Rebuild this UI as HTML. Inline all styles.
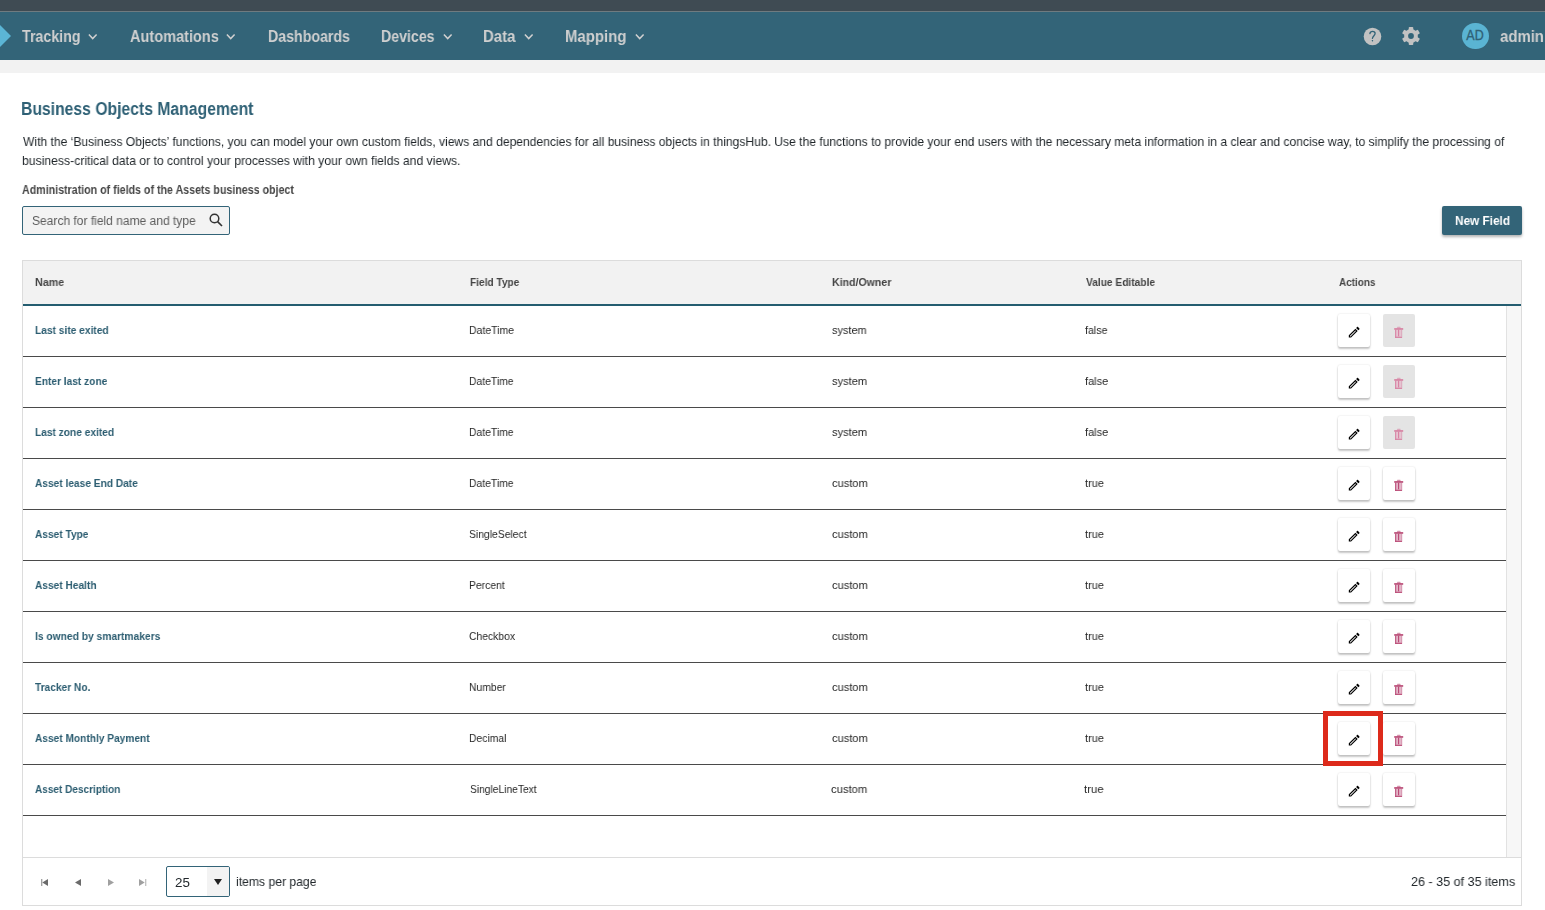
<!DOCTYPE html>
<html><head><meta charset="utf-8">
<style>
*{margin:0;padding:0;box-sizing:border-box}
html,body{width:1545px;height:910px;overflow:hidden;background:#fff;font-family:"Liberation Sans",sans-serif}
.a{position:absolute;white-space:nowrap}
.t{position:absolute;white-space:nowrap;line-height:1;transform-origin:0 0;will-change:transform}
#topbar{position:absolute;left:0;top:0;width:1545px;height:11px;background:#3f4b53}
#topline{position:absolute;left:0;top:11px;width:1545px;height:1px;background:#6f7b80}
#nav{position:absolute;left:0;top:12px;width:1545px;height:48px;background:#336478}
#band{position:absolute;left:0;top:60px;width:1545px;height:13px;background:#f2f2f2}
.chev{position:absolute;width:10px;height:8px}
.rowline{position:absolute;left:23px;width:1483px;height:1px;background:#4a4a4a}
.btn{position:absolute;width:32px;height:33px;background:#fff;border-radius:2px;box-shadow:0 2px 2px rgba(0,0,0,.22),0 0 2px rgba(0,0,0,.14)}
.btn.dis{background:#e4e4e4;box-shadow:none}
.btn svg{position:absolute;left:10px;top:12px}
</style></head><body>
<div id="topbar"></div><div id="topline"></div>
<div id="nav"></div>
<div id="band"></div>
<svg class="a" style="left:0;top:25px" width="12" height="22" viewBox="0 0 12 22"><path d="M0 0 L11 11 L0 22 Z" fill="#5bb5d5"/></svg>
<svg class="chev" style="left:88px;top:33px" viewBox="0 0 10 8"><path d="M0.9 1.4 L4.7 5.6 L8.6 1.4" stroke="#d0d0d0" stroke-width="1.5" fill="none"/></svg>
<svg class="chev" style="left:226px;top:33px" viewBox="0 0 10 8"><path d="M0.9 1.4 L4.7 5.6 L8.6 1.4" stroke="#d0d0d0" stroke-width="1.5" fill="none"/></svg>
<svg class="chev" style="left:443px;top:33px" viewBox="0 0 10 8"><path d="M0.9 1.4 L4.7 5.6 L8.6 1.4" stroke="#d0d0d0" stroke-width="1.5" fill="none"/></svg>
<svg class="chev" style="left:524px;top:33px" viewBox="0 0 10 8"><path d="M0.9 1.4 L4.7 5.6 L8.6 1.4" stroke="#d0d0d0" stroke-width="1.5" fill="none"/></svg>
<svg class="chev" style="left:635px;top:33px" viewBox="0 0 10 8"><path d="M0.9 1.4 L4.7 5.6 L8.6 1.4" stroke="#d0d0d0" stroke-width="1.5" fill="none"/></svg>
<svg class="a" style="left:1363px;top:27px" width="19" height="19" viewBox="0 0 19 19"><circle cx="9.5" cy="9.5" r="8.8" fill="#c2c2c2"/><path d="M6.9 6.6 C7.1 4.9 8.3 4.3 9.6 4.3 C11.2 4.3 12.1 5.3 12.1 6.5 C12.1 8.4 9.8 8.9 9.4 11.3" stroke="#336478" stroke-width="1.3" fill="none" stroke-linecap="round"/><path d="M8.6 12.9 L10.3 12.9 L9.3 15 Z" fill="#336478"/></svg>
<svg class="a" style="left:1398.8px;top:24.1px" width="24" height="24" viewBox="0 0 24 24"><circle cx="12" cy="12" r="6.9" fill="#c2c2c2"/><rect x="9.75" y="2.9" width="4.5" height="18.2" rx="0.8" fill="#c2c2c2" transform="rotate(0 12 12)"/><rect x="9.75" y="2.9" width="4.5" height="18.2" rx="0.8" fill="#c2c2c2" transform="rotate(60 12 12)"/><rect x="9.75" y="2.9" width="4.5" height="18.2" rx="0.8" fill="#c2c2c2" transform="rotate(120 12 12)"/><circle cx="12" cy="12" r="2.9" fill="#336478"/></svg>
<div class="a" style="left:1462px;top:22.6px;width:26.5px;height:26.5px;border-radius:50%;background:#5ab4d3"></div><div class="a" style="left:1475.2px;top:22.3px;width:40px;margin-left:-20px;height:26px;line-height:26px;text-align:center;color:#2f6176;font-size:14.5px;transform:scaleX(.86);-webkit-text-stroke:0.35px #2f6176">AD</div>

<div class="a" style="left:22px;top:206px;width:208px;height:29px;border:1px solid #336478;border-radius:2px;background:#f3f3f3"></div>
<svg class="a" style="left:209px;top:213px" width="14" height="14" viewBox="0 0 14 14"><circle cx="5.5" cy="5.5" r="4.3" stroke="#333" stroke-width="1.5" fill="none"/><path d="M8.6 8.6 L13 13" stroke="#333" stroke-width="1.6"/></svg>
<div class="a" style="left:1442px;top:206px;width:80px;height:29px;background:#336478;border-radius:2px;box-shadow:0 2px 3px rgba(0,0,0,.3)"></div>

<!-- table -->
<div class="a" style="left:22px;top:260px;width:1500px;height:646px;border:1px solid #dcdcdc"></div>
<div class="a" style="left:23px;top:261px;width:1498px;height:43px;background:#f2f2f2"></div>
<div class="a" style="left:23px;top:304px;width:1498px;height:2px;background:#245d70"></div>
<div class="a" style="left:1506px;top:306px;width:15px;height:551px;background:#f7f7f7;border-left:1px solid #e2e2e2"></div>
<div class="a" style="left:23px;top:857px;width:1498px;height:1px;background:#dcdcdc"></div>
<div class="btn" style="left:1338px;top:314px"><svg width="14.4" height="14.4" viewBox="0 0 24 24" style="left:8.6px;top:11px"><path fill="#000" d="M3 17.25V21h3.75L17.81 9.94l-3.75-3.75L3 17.25zM5.92 19H5v-.92l9.06-9.06.92.92L5.92 19zM20.71 5.63l-2.34-2.34c-.2-.2-.45-.29-.71-.29s-.51.1-.7.29l-1.83 1.83 3.75 3.75 1.83-1.83c.39-.39.39-1.020 0-1.41z"/></svg></div>
<div class="btn dis" style="left:1383px;top:314px"><svg width="10" height="12" viewBox="0 0 10 12" style="left:10.8px;top:12px"><path d="M2.6 2.4 L3.4 0.8 L6.2 0.8 L7 2.4Z" fill="#d6789c" opacity=".55"/><rect x="0.2" y="2.2" width="9" height="1.5" fill="#d6789c"/><rect x="1.2" y="3.7" width="7" height="8" fill="#d6789c" opacity=".5"/><rect x="1.2" y="3.7" width="1" height="8.2" fill="#d6789c" opacity=".85"/><rect x="1.2" y="10.9" width="6.8" height="1" fill="#d6789c" opacity=".85"/><rect x="4.1" y="3.7" width="1" height="6.5" fill="#d6789c" opacity=".9"/><rect x="2.4" y="4" width="1.4" height="6.4" fill="#fff" opacity=".35"/><rect x="5.4" y="4" width="1.4" height="6.4" fill="#fff" opacity=".35"/></svg></div>
<div class="rowline" style="top:356px"></div>
<div class="btn" style="left:1338px;top:365px"><svg width="14.4" height="14.4" viewBox="0 0 24 24" style="left:8.6px;top:11px"><path fill="#000" d="M3 17.25V21h3.75L17.81 9.94l-3.75-3.75L3 17.25zM5.92 19H5v-.92l9.06-9.06.92.92L5.92 19zM20.71 5.63l-2.34-2.34c-.2-.2-.45-.29-.71-.29s-.51.1-.7.29l-1.83 1.83 3.75 3.75 1.83-1.83c.39-.39.39-1.020 0-1.41z"/></svg></div>
<div class="btn dis" style="left:1383px;top:365px"><svg width="10" height="12" viewBox="0 0 10 12" style="left:10.8px;top:12px"><path d="M2.6 2.4 L3.4 0.8 L6.2 0.8 L7 2.4Z" fill="#d6789c" opacity=".55"/><rect x="0.2" y="2.2" width="9" height="1.5" fill="#d6789c"/><rect x="1.2" y="3.7" width="7" height="8" fill="#d6789c" opacity=".5"/><rect x="1.2" y="3.7" width="1" height="8.2" fill="#d6789c" opacity=".85"/><rect x="1.2" y="10.9" width="6.8" height="1" fill="#d6789c" opacity=".85"/><rect x="4.1" y="3.7" width="1" height="6.5" fill="#d6789c" opacity=".9"/><rect x="2.4" y="4" width="1.4" height="6.4" fill="#fff" opacity=".35"/><rect x="5.4" y="4" width="1.4" height="6.4" fill="#fff" opacity=".35"/></svg></div>
<div class="rowline" style="top:407px"></div>
<div class="btn" style="left:1338px;top:416px"><svg width="14.4" height="14.4" viewBox="0 0 24 24" style="left:8.6px;top:11px"><path fill="#000" d="M3 17.25V21h3.75L17.81 9.94l-3.75-3.75L3 17.25zM5.92 19H5v-.92l9.06-9.06.92.92L5.92 19zM20.71 5.63l-2.34-2.34c-.2-.2-.45-.29-.71-.29s-.51.1-.7.29l-1.83 1.83 3.75 3.75 1.83-1.83c.39-.39.39-1.020 0-1.41z"/></svg></div>
<div class="btn dis" style="left:1383px;top:416px"><svg width="10" height="12" viewBox="0 0 10 12" style="left:10.8px;top:12px"><path d="M2.6 2.4 L3.4 0.8 L6.2 0.8 L7 2.4Z" fill="#d6789c" opacity=".55"/><rect x="0.2" y="2.2" width="9" height="1.5" fill="#d6789c"/><rect x="1.2" y="3.7" width="7" height="8" fill="#d6789c" opacity=".5"/><rect x="1.2" y="3.7" width="1" height="8.2" fill="#d6789c" opacity=".85"/><rect x="1.2" y="10.9" width="6.8" height="1" fill="#d6789c" opacity=".85"/><rect x="4.1" y="3.7" width="1" height="6.5" fill="#d6789c" opacity=".9"/><rect x="2.4" y="4" width="1.4" height="6.4" fill="#fff" opacity=".35"/><rect x="5.4" y="4" width="1.4" height="6.4" fill="#fff" opacity=".35"/></svg></div>
<div class="rowline" style="top:458px"></div>
<div class="btn" style="left:1338px;top:467px"><svg width="14.4" height="14.4" viewBox="0 0 24 24" style="left:8.6px;top:11px"><path fill="#000" d="M3 17.25V21h3.75L17.81 9.94l-3.75-3.75L3 17.25zM5.92 19H5v-.92l9.06-9.06.92.92L5.92 19zM20.71 5.63l-2.34-2.34c-.2-.2-.45-.29-.71-.29s-.51.1-.7.29l-1.83 1.83 3.75 3.75 1.83-1.83c.39-.39.39-1.020 0-1.41z"/></svg></div>
<div class="btn" style="left:1383px;top:467px"><svg width="10" height="12" viewBox="0 0 10 12" style="left:10.8px;top:12px"><path d="M2.6 2.4 L3.4 0.8 L6.2 0.8 L7 2.4Z" fill="#b33a69" opacity=".55"/><rect x="0.2" y="2.2" width="9" height="1.5" fill="#b33a69"/><rect x="1.2" y="3.7" width="7" height="8" fill="#b33a69" opacity=".5"/><rect x="1.2" y="3.7" width="1" height="8.2" fill="#b33a69" opacity=".85"/><rect x="1.2" y="10.9" width="6.8" height="1" fill="#b33a69" opacity=".85"/><rect x="4.1" y="3.7" width="1" height="6.5" fill="#b33a69" opacity=".9"/><rect x="2.4" y="4" width="1.4" height="6.4" fill="#fff" opacity=".35"/><rect x="5.4" y="4" width="1.4" height="6.4" fill="#fff" opacity=".35"/></svg></div>
<div class="rowline" style="top:509px"></div>
<div class="btn" style="left:1338px;top:518px"><svg width="14.4" height="14.4" viewBox="0 0 24 24" style="left:8.6px;top:11px"><path fill="#000" d="M3 17.25V21h3.75L17.81 9.94l-3.75-3.75L3 17.25zM5.92 19H5v-.92l9.06-9.06.92.92L5.92 19zM20.71 5.63l-2.34-2.34c-.2-.2-.45-.29-.71-.29s-.51.1-.7.29l-1.83 1.83 3.75 3.75 1.83-1.83c.39-.39.39-1.020 0-1.41z"/></svg></div>
<div class="btn" style="left:1383px;top:518px"><svg width="10" height="12" viewBox="0 0 10 12" style="left:10.8px;top:12px"><path d="M2.6 2.4 L3.4 0.8 L6.2 0.8 L7 2.4Z" fill="#b33a69" opacity=".55"/><rect x="0.2" y="2.2" width="9" height="1.5" fill="#b33a69"/><rect x="1.2" y="3.7" width="7" height="8" fill="#b33a69" opacity=".5"/><rect x="1.2" y="3.7" width="1" height="8.2" fill="#b33a69" opacity=".85"/><rect x="1.2" y="10.9" width="6.8" height="1" fill="#b33a69" opacity=".85"/><rect x="4.1" y="3.7" width="1" height="6.5" fill="#b33a69" opacity=".9"/><rect x="2.4" y="4" width="1.4" height="6.4" fill="#fff" opacity=".35"/><rect x="5.4" y="4" width="1.4" height="6.4" fill="#fff" opacity=".35"/></svg></div>
<div class="rowline" style="top:560px"></div>
<div class="btn" style="left:1338px;top:569px"><svg width="14.4" height="14.4" viewBox="0 0 24 24" style="left:8.6px;top:11px"><path fill="#000" d="M3 17.25V21h3.75L17.81 9.94l-3.75-3.75L3 17.25zM5.92 19H5v-.92l9.06-9.06.92.92L5.92 19zM20.71 5.63l-2.34-2.34c-.2-.2-.45-.29-.71-.29s-.51.1-.7.29l-1.83 1.83 3.75 3.75 1.83-1.83c.39-.39.39-1.020 0-1.41z"/></svg></div>
<div class="btn" style="left:1383px;top:569px"><svg width="10" height="12" viewBox="0 0 10 12" style="left:10.8px;top:12px"><path d="M2.6 2.4 L3.4 0.8 L6.2 0.8 L7 2.4Z" fill="#b33a69" opacity=".55"/><rect x="0.2" y="2.2" width="9" height="1.5" fill="#b33a69"/><rect x="1.2" y="3.7" width="7" height="8" fill="#b33a69" opacity=".5"/><rect x="1.2" y="3.7" width="1" height="8.2" fill="#b33a69" opacity=".85"/><rect x="1.2" y="10.9" width="6.8" height="1" fill="#b33a69" opacity=".85"/><rect x="4.1" y="3.7" width="1" height="6.5" fill="#b33a69" opacity=".9"/><rect x="2.4" y="4" width="1.4" height="6.4" fill="#fff" opacity=".35"/><rect x="5.4" y="4" width="1.4" height="6.4" fill="#fff" opacity=".35"/></svg></div>
<div class="rowline" style="top:611px"></div>
<div class="btn" style="left:1338px;top:620px"><svg width="14.4" height="14.4" viewBox="0 0 24 24" style="left:8.6px;top:11px"><path fill="#000" d="M3 17.25V21h3.75L17.81 9.94l-3.75-3.75L3 17.25zM5.92 19H5v-.92l9.06-9.06.92.92L5.92 19zM20.71 5.63l-2.34-2.34c-.2-.2-.45-.29-.71-.29s-.51.1-.7.29l-1.83 1.83 3.75 3.75 1.83-1.83c.39-.39.39-1.020 0-1.41z"/></svg></div>
<div class="btn" style="left:1383px;top:620px"><svg width="10" height="12" viewBox="0 0 10 12" style="left:10.8px;top:12px"><path d="M2.6 2.4 L3.4 0.8 L6.2 0.8 L7 2.4Z" fill="#b33a69" opacity=".55"/><rect x="0.2" y="2.2" width="9" height="1.5" fill="#b33a69"/><rect x="1.2" y="3.7" width="7" height="8" fill="#b33a69" opacity=".5"/><rect x="1.2" y="3.7" width="1" height="8.2" fill="#b33a69" opacity=".85"/><rect x="1.2" y="10.9" width="6.8" height="1" fill="#b33a69" opacity=".85"/><rect x="4.1" y="3.7" width="1" height="6.5" fill="#b33a69" opacity=".9"/><rect x="2.4" y="4" width="1.4" height="6.4" fill="#fff" opacity=".35"/><rect x="5.4" y="4" width="1.4" height="6.4" fill="#fff" opacity=".35"/></svg></div>
<div class="rowline" style="top:662px"></div>
<div class="btn" style="left:1338px;top:671px"><svg width="14.4" height="14.4" viewBox="0 0 24 24" style="left:8.6px;top:11px"><path fill="#000" d="M3 17.25V21h3.75L17.81 9.94l-3.75-3.75L3 17.25zM5.92 19H5v-.92l9.06-9.06.92.92L5.92 19zM20.71 5.63l-2.34-2.34c-.2-.2-.45-.29-.71-.29s-.51.1-.7.29l-1.83 1.83 3.75 3.75 1.83-1.83c.39-.39.39-1.020 0-1.41z"/></svg></div>
<div class="btn" style="left:1383px;top:671px"><svg width="10" height="12" viewBox="0 0 10 12" style="left:10.8px;top:12px"><path d="M2.6 2.4 L3.4 0.8 L6.2 0.8 L7 2.4Z" fill="#b33a69" opacity=".55"/><rect x="0.2" y="2.2" width="9" height="1.5" fill="#b33a69"/><rect x="1.2" y="3.7" width="7" height="8" fill="#b33a69" opacity=".5"/><rect x="1.2" y="3.7" width="1" height="8.2" fill="#b33a69" opacity=".85"/><rect x="1.2" y="10.9" width="6.8" height="1" fill="#b33a69" opacity=".85"/><rect x="4.1" y="3.7" width="1" height="6.5" fill="#b33a69" opacity=".9"/><rect x="2.4" y="4" width="1.4" height="6.4" fill="#fff" opacity=".35"/><rect x="5.4" y="4" width="1.4" height="6.4" fill="#fff" opacity=".35"/></svg></div>
<div class="rowline" style="top:713px"></div>
<div class="btn" style="left:1338px;top:722px"><svg width="14.4" height="14.4" viewBox="0 0 24 24" style="left:8.6px;top:11px"><path fill="#000" d="M3 17.25V21h3.75L17.81 9.94l-3.75-3.75L3 17.25zM5.92 19H5v-.92l9.06-9.06.92.92L5.92 19zM20.71 5.63l-2.34-2.34c-.2-.2-.45-.29-.71-.29s-.51.1-.7.29l-1.83 1.83 3.75 3.75 1.83-1.83c.39-.39.39-1.020 0-1.41z"/></svg></div>
<div class="btn" style="left:1383px;top:722px"><svg width="10" height="12" viewBox="0 0 10 12" style="left:10.8px;top:12px"><path d="M2.6 2.4 L3.4 0.8 L6.2 0.8 L7 2.4Z" fill="#b33a69" opacity=".55"/><rect x="0.2" y="2.2" width="9" height="1.5" fill="#b33a69"/><rect x="1.2" y="3.7" width="7" height="8" fill="#b33a69" opacity=".5"/><rect x="1.2" y="3.7" width="1" height="8.2" fill="#b33a69" opacity=".85"/><rect x="1.2" y="10.9" width="6.8" height="1" fill="#b33a69" opacity=".85"/><rect x="4.1" y="3.7" width="1" height="6.5" fill="#b33a69" opacity=".9"/><rect x="2.4" y="4" width="1.4" height="6.4" fill="#fff" opacity=".35"/><rect x="5.4" y="4" width="1.4" height="6.4" fill="#fff" opacity=".35"/></svg></div>
<div class="rowline" style="top:764px"></div>
<div class="btn" style="left:1338px;top:773px"><svg width="14.4" height="14.4" viewBox="0 0 24 24" style="left:8.6px;top:11px"><path fill="#000" d="M3 17.25V21h3.75L17.81 9.94l-3.75-3.75L3 17.25zM5.92 19H5v-.92l9.06-9.06.92.92L5.92 19zM20.71 5.63l-2.34-2.34c-.2-.2-.45-.29-.71-.29s-.51.1-.7.29l-1.83 1.83 3.75 3.75 1.83-1.83c.39-.39.39-1.020 0-1.41z"/></svg></div>
<div class="btn" style="left:1383px;top:773px"><svg width="10" height="12" viewBox="0 0 10 12" style="left:10.8px;top:12px"><path d="M2.6 2.4 L3.4 0.8 L6.2 0.8 L7 2.4Z" fill="#b33a69" opacity=".55"/><rect x="0.2" y="2.2" width="9" height="1.5" fill="#b33a69"/><rect x="1.2" y="3.7" width="7" height="8" fill="#b33a69" opacity=".5"/><rect x="1.2" y="3.7" width="1" height="8.2" fill="#b33a69" opacity=".85"/><rect x="1.2" y="10.9" width="6.8" height="1" fill="#b33a69" opacity=".85"/><rect x="4.1" y="3.7" width="1" height="6.5" fill="#b33a69" opacity=".9"/><rect x="2.4" y="4" width="1.4" height="6.4" fill="#fff" opacity=".35"/><rect x="5.4" y="4" width="1.4" height="6.4" fill="#fff" opacity=".35"/></svg></div>
<div class="rowline" style="top:815px"></div>

<!-- footer -->
<svg class="a" style="left:41px;top:879px" width="8" height="7" viewBox="0 0 8 7"><rect x="0.2" y="0" width="1.1" height="7" fill="#8c8c8c"/><path d="M7 0 L1.3 3.5 L7 7Z" fill="#6b6b6b"/></svg>
<svg class="a" style="left:75px;top:879px" width="7" height="7" viewBox="0 0 7 7"><path d="M6 0 L0 3.5 L6 7Z" fill="#6b6b6b"/></svg>
<svg class="a" style="left:108px;top:879px" width="7" height="7" viewBox="0 0 7 7"><path d="M0 0 L6 3.5 L0 7Z" fill="#a0a0a0"/></svg>
<svg class="a" style="left:139px;top:879px" width="8" height="7" viewBox="0 0 8 7"><path d="M0 0 L5.7 3.5 L0 7Z" fill="#a0a0a0"/><rect x="6.2" y="0" width="1.1" height="7" fill="#b5b5b5"/></svg>
<div class="a" style="left:166px;top:866px;width:64px;height:31px;border:1px solid #336478;border-radius:2px;background:#fff;overflow:hidden"><div style="position:absolute;left:40px;top:0;width:23px;height:29px;background:#f3f3f3"></div></div>
<svg class="a" style="left:214px;top:879px" width="8" height="6" viewBox="0 0 8 6"><path d="M0 0 L8 0 L4 6Z" fill="#222"/></svg>

<div class="t" id="nav_tracking" style="left:22.25px;top:29.01px;font-size:16px;font-weight:bold;color:#d0d0d0;transform:scaleX(0.8894)">Tracking</div>
<div class="t" id="nav_automations" style="left:129.85px;top:29.01px;font-size:16px;font-weight:bold;color:#d0d0d0;transform:scaleX(0.9082)">Automations</div>
<div class="t" id="nav_dashboards" style="left:267.52px;top:29.01px;font-size:16px;font-weight:bold;color:#d0d0d0;transform:scaleX(0.8863)">Dashboards</div>
<div class="t" id="nav_devices" style="left:381.31px;top:29.01px;font-size:16px;font-weight:bold;color:#d0d0d0;transform:scaleX(0.8857)">Devices</div>
<div class="t" id="nav_data" style="left:483.05px;top:29.01px;font-size:16px;font-weight:bold;color:#d0d0d0;transform:scaleX(0.9341)">Data</div>
<div class="t" id="nav_mapping" style="left:565.26px;top:29.01px;font-size:16px;font-weight:bold;color:#d0d0d0;transform:scaleX(0.9337)">Mapping</div>
<div class="t" id="nav_admin" style="left:1500.11px;top:29.01px;font-size:16px;font-weight:bold;color:#d0d0d0;transform:scaleX(0.9319)">admin</div>
<div class="t" id="title" style="left:21.30px;top:101.00px;font-size:17.5px;font-weight:bold;color:#2e6075;transform:scaleX(0.8985)">Business Objects Management</div>
<div class="t" id="para1" style="left:22.79px;top:135.00px;font-size:13px;font-weight:normal;color:#1f2529;transform:scaleX(0.9297)">With the ‘Business Objects’ functions, you can model your own custom fields, views and dependencies for all business objects in thingsHub. Use the functions to provide your end users with the necessary meta information in a clear and concise way, to simplify the processing of</div>
<div class="t" id="para2" style="left:21.61px;top:154.00px;font-size:13px;font-weight:normal;color:#1f2529;transform:scaleX(0.9381)">business-critical data or to control your processes with your own fields and views.</div>
<div class="t" id="adminlbl" style="left:22.05px;top:184.01px;font-size:12px;font-weight:bold;color:#474747;transform:scaleX(0.8878)">Administration of fields of the Assets business object</div>
<div class="t" id="search" style="left:31.54px;top:214.81px;font-size:12.5px;font-weight:normal;color:#5c5c5c;transform:scaleX(0.9619)">Search for field name and type</div>
<div class="t" id="newfield" style="left:1455.03px;top:214.00px;font-size:13px;font-weight:bold;color:#ffffff;transform:scaleX(0.9069)">New Field</div>
<div class="t" id="h_name" style="left:34.98px;top:277.00px;font-size:11px;font-weight:bold;color:#454545;transform:scaleX(0.9778)">Name</div>
<div class="t" id="h_type" style="left:469.82px;top:277.00px;font-size:11px;font-weight:bold;color:#454545;transform:scaleX(0.9194)">Field Type</div>
<div class="t" id="h_kind" style="left:831.79px;top:277.00px;font-size:11px;font-weight:bold;color:#454545;transform:scaleX(0.9617)">Kind/Owner</div>
<div class="t" id="h_val" style="left:1086.40px;top:277.00px;font-size:11px;font-weight:bold;color:#454545;transform:scaleX(0.9251)">Value Editable</div>
<div class="t" id="h_act" style="left:1339.05px;top:277.00px;font-size:11px;font-weight:bold;color:#454545;transform:scaleX(0.9039)">Actions</div>
<div class="t" id="r0_n" style="left:35.06px;top:325.01px;font-size:11.5px;font-weight:bold;color:#2c5d71;transform:scaleX(0.8864)">Last site exited</div>
<div class="t" id="r0_t" style="left:469.24px;top:325.01px;font-size:11.5px;font-weight:normal;color:#262626;transform:scaleX(0.9105)">DateTime</div>
<div class="t" id="r0_k" style="left:831.67px;top:325.01px;font-size:11.5px;font-weight:normal;color:#262626;transform:scaleX(0.9522)">system</div>
<div class="t" id="r0_v" style="left:1084.61px;top:325.01px;font-size:11.5px;font-weight:normal;color:#262626;transform:scaleX(0.9232)">false</div>
<div class="t" id="r1_n" style="left:35.06px;top:376.01px;font-size:11.5px;font-weight:bold;color:#2c5d71;transform:scaleX(0.8836)">Enter last zone</div>
<div class="t" id="r1_t" style="left:469.24px;top:376.01px;font-size:11.5px;font-weight:normal;color:#262626;transform:scaleX(0.9008)">DateTime</div>
<div class="t" id="r1_k" style="left:831.67px;top:376.01px;font-size:11.5px;font-weight:normal;color:#262626;transform:scaleX(0.9651)">system</div>
<div class="t" id="r1_v" style="left:1084.61px;top:376.01px;font-size:11.5px;font-weight:normal;color:#262626;transform:scaleX(0.9538)">false</div>
<div class="t" id="r2_n" style="left:35.06px;top:427.01px;font-size:11.5px;font-weight:bold;color:#2c5d71;transform:scaleX(0.8836)">Last zone exited</div>
<div class="t" id="r2_t" style="left:469.24px;top:427.01px;font-size:11.5px;font-weight:normal;color:#262626;transform:scaleX(0.9008)">DateTime</div>
<div class="t" id="r2_k" style="left:831.67px;top:427.01px;font-size:11.5px;font-weight:normal;color:#262626;transform:scaleX(0.9651)">system</div>
<div class="t" id="r2_v" style="left:1084.61px;top:427.01px;font-size:11.5px;font-weight:normal;color:#262626;transform:scaleX(0.9538)">false</div>
<div class="t" id="r3_n" style="left:35.06px;top:478.01px;font-size:11.5px;font-weight:bold;color:#2c5d71;transform:scaleX(0.8836)">Asset lease End Date</div>
<div class="t" id="r3_t" style="left:469.24px;top:478.01px;font-size:11.5px;font-weight:normal;color:#262626;transform:scaleX(0.9008)">DateTime</div>
<div class="t" id="r3_k" style="left:831.67px;top:478.01px;font-size:11.5px;font-weight:normal;color:#262626;transform:scaleX(0.9651)">custom</div>
<div class="t" id="r3_v" style="left:1084.61px;top:478.01px;font-size:11.5px;font-weight:normal;color:#262626;transform:scaleX(0.9538)">true</div>
<div class="t" id="r4_n" style="left:35.06px;top:529.01px;font-size:11.5px;font-weight:bold;color:#2c5d71;transform:scaleX(0.8836)">Asset Type</div>
<div class="t" id="r4_t" style="left:469.24px;top:529.01px;font-size:11.5px;font-weight:normal;color:#262626;transform:scaleX(0.9008)">SingleSelect</div>
<div class="t" id="r4_k" style="left:831.67px;top:529.01px;font-size:11.5px;font-weight:normal;color:#262626;transform:scaleX(0.9651)">custom</div>
<div class="t" id="r4_v" style="left:1084.61px;top:529.01px;font-size:11.5px;font-weight:normal;color:#262626;transform:scaleX(0.9538)">true</div>
<div class="t" id="r5_n" style="left:35.06px;top:580.01px;font-size:11.5px;font-weight:bold;color:#2c5d71;transform:scaleX(0.8836)">Asset Health</div>
<div class="t" id="r5_t" style="left:469.24px;top:580.01px;font-size:11.5px;font-weight:normal;color:#262626;transform:scaleX(0.9008)">Percent</div>
<div class="t" id="r5_k" style="left:831.67px;top:580.01px;font-size:11.5px;font-weight:normal;color:#262626;transform:scaleX(0.9651)">custom</div>
<div class="t" id="r5_v" style="left:1084.61px;top:580.01px;font-size:11.5px;font-weight:normal;color:#262626;transform:scaleX(0.9538)">true</div>
<div class="t" id="r6_n" style="left:35.27px;top:631.00px;font-size:11.5px;font-weight:bold;color:#2c5d71;transform:scaleX(0.8916)">Is owned by smartmakers</div>
<div class="t" id="r6_t" style="left:469.24px;top:631.01px;font-size:11.5px;font-weight:normal;color:#262626;transform:scaleX(0.9008)">Checkbox</div>
<div class="t" id="r6_k" style="left:831.67px;top:631.01px;font-size:11.5px;font-weight:normal;color:#262626;transform:scaleX(0.9651)">custom</div>
<div class="t" id="r6_v" style="left:1084.61px;top:631.01px;font-size:11.5px;font-weight:normal;color:#262626;transform:scaleX(0.9538)">true</div>
<div class="t" id="r7_n" style="left:35.06px;top:682.01px;font-size:11.5px;font-weight:bold;color:#2c5d71;transform:scaleX(0.8836)">Tracker No.</div>
<div class="t" id="r7_t" style="left:469.24px;top:682.01px;font-size:11.5px;font-weight:normal;color:#262626;transform:scaleX(0.9008)">Number</div>
<div class="t" id="r7_k" style="left:831.67px;top:682.01px;font-size:11.5px;font-weight:normal;color:#262626;transform:scaleX(0.9651)">custom</div>
<div class="t" id="r7_v" style="left:1084.61px;top:682.01px;font-size:11.5px;font-weight:normal;color:#262626;transform:scaleX(0.9538)">true</div>
<div class="t" id="r8_n" style="left:35.06px;top:733.01px;font-size:11.5px;font-weight:bold;color:#2c5d71;transform:scaleX(0.8836)">Asset Monthly Payment</div>
<div class="t" id="r8_t" style="left:469.24px;top:733.01px;font-size:11.5px;font-weight:normal;color:#262626;transform:scaleX(0.9008)">Decimal</div>
<div class="t" id="r8_k" style="left:831.67px;top:733.01px;font-size:11.5px;font-weight:normal;color:#262626;transform:scaleX(0.9651)">custom</div>
<div class="t" id="r8_v" style="left:1084.61px;top:733.01px;font-size:11.5px;font-weight:normal;color:#262626;transform:scaleX(0.9538)">true</div>
<div class="t" id="r9_n" style="left:35.45px;top:784.00px;font-size:11.5px;font-weight:bold;color:#2c5d71;transform:scaleX(0.8728)">Asset Description</div>
<div class="t" id="r9_t" style="left:469.61px;top:784.00px;font-size:11.5px;font-weight:normal;color:#262626;transform:scaleX(0.8912)">SingleLineText</div>
<div class="t" id="r9_k" style="left:830.71px;top:784.00px;font-size:11.5px;font-weight:normal;color:#262626;transform:scaleX(0.9780)">custom</div>
<div class="t" id="r9_v" style="left:1084.25px;top:784.00px;font-size:11.5px;font-weight:normal;color:#262626;transform:scaleX(0.9845)">true</div>
<div class="t" id="pg_25" style="left:174.69px;top:875.50px;font-size:13px;font-weight:normal;color:#22282c;transform:scaleX(1.0291)">25</div>
<div class="t" id="pg_ipp" style="left:236.02px;top:875.00px;font-size:13px;font-weight:normal;color:#22282c;transform:scaleX(0.9358)">items per page</div>
<div class="t" id="pg_items" style="left:1410.54px;top:875.00px;font-size:13px;font-weight:normal;color:#22282c;transform:scaleX(0.9674)">26 - 35 of 35 items</div>

<div class="a" style="left:1323px;top:711px;width:60px;height:55px;border:5px solid #dd2a1b"></div>
</body></html>
